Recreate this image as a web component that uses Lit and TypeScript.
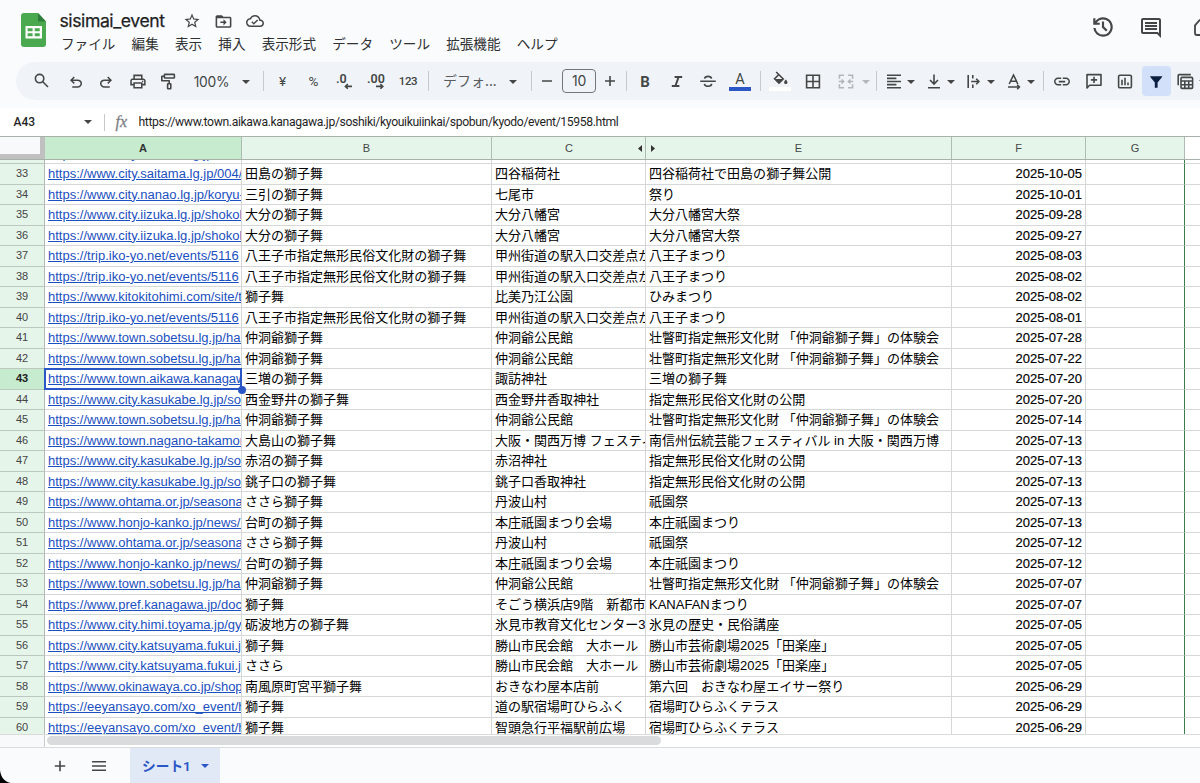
import { LitElement, html, css, svg, nothing } from "lit";
import { customElement } from "lit/decorators.js";
import { classMap } from "lit/directives/class-map.js";
import { styleMap } from "lit/directives/style-map.js";

type Row = [number, string, string, string, string, string];

const SOBETSU = "https://www.town.sobetsu.lg.jp/ha3.html";
const KASUKABE = "https://www.city.kasukabe.lg.jp/so";
const HACHI = "八王子市指定無形民俗文化財の獅子舞";
const KOSHU = "甲州街道の駅入口交差点から";
const TAIKEN = "壮瞥町指定無形文化財 「仲洞爺獅子舞」の体験会";

const ROWS: Row[] = [
  [32, "https://www.city.saitama.lg.jp/004/", "", "", "", ""],
  [33, "https://www.city.saitama.lg.jp/004/", "田島の獅子舞", "四谷稲荷社", "四谷稲荷社で田島の獅子舞公開", "2025-10-05"],
  [34, "https://www.city.nanao.lg.jp/koryu-", "三引の獅子舞", "七尾市", "祭り", "2025-10-01"],
  [35, "https://www.city.iizuka.lg.jp/shokoh", "大分の獅子舞", "大分八幡宮", "大分八幡宮大祭", "2025-09-28"],
  [36, "https://www.city.iizuka.lg.jp/shokoh", "大分の獅子舞", "大分八幡宮", "大分八幡宮大祭", "2025-09-27"],
  [37, "https://trip.iko-yo.net/events/5116", HACHI, KOSHU, "八王子まつり", "2025-08-03"],
  [38, "https://trip.iko-yo.net/events/5116", HACHI, KOSHU, "八王子まつり", "2025-08-02"],
  [39, "https://www.kitokitohimi.com/site/t", "獅子舞", "比美乃江公園", "ひみまつり", "2025-08-02"],
  [40, "https://trip.iko-yo.net/events/5116", HACHI, KOSHU, "八王子まつり", "2025-08-01"],
  [41, SOBETSU, "仲洞爺獅子舞", "仲洞爺公民館", TAIKEN, "2025-07-28"],
  [42, SOBETSU, "仲洞爺獅子舞", "仲洞爺公民館", TAIKEN, "2025-07-22"],
  [43, "https://www.town.aikawa.kanagawa.jp/", "三増の獅子舞", "諏訪神社", "三増の獅子舞", "2025-07-20"],
  [44, KASUKABE, "西金野井の獅子舞", "西金野井香取神社", "指定無形民俗文化財の公開", "2025-07-20"],
  [45, SOBETSU, "仲洞爺獅子舞", "仲洞爺公民館", TAIKEN, "2025-07-14"],
  [46, "https://www.town.nagano-takamori", "大島山の獅子舞", "大阪・関西万博 フェスティバル", "南信州伝統芸能フェスティバル in 大阪・関西万博", "2025-07-13"],
  [47, KASUKABE, "赤沼の獅子舞", "赤沼神社", "指定無形民俗文化財の公開", "2025-07-13"],
  [48, KASUKABE, "銚子口の獅子舞", "銚子口香取神社", "指定無形民俗文化財の公開", "2025-07-13"],
  [49, "https://www.ohtama.or.jp/seasonal", "ささら獅子舞", "丹波山村", "祇園祭", "2025-07-13"],
  [50, "https://www.honjo-kanko.jp/news/2", "台町の獅子舞", "本庄祇園まつり会場", "本庄祇園まつり", "2025-07-13"],
  [51, "https://www.ohtama.or.jp/seasonal", "ささら獅子舞", "丹波山村", "祇園祭", "2025-07-12"],
  [52, "https://www.honjo-kanko.jp/news/2", "台町の獅子舞", "本庄祇園まつり会場", "本庄祇園まつり", "2025-07-12"],
  [53, SOBETSU, "仲洞爺獅子舞", "仲洞爺公民館", TAIKEN, "2025-07-07"],
  [54, "https://www.pref.kanagawa.jp/docs", "獅子舞", "そごう横浜店9階　新都市", "KANAFANまつり", "2025-07-07"],
  [55, "https://www.city.himi.toyama.jp/gy", "砺波地方の獅子舞", "氷見市教育文化センター3", "氷見の歴史・民俗講座", "2025-07-05"],
  [56, "https://www.city.katsuyama.fukui.jp", "獅子舞", "勝山市民会館　大ホール", "勝山市芸術劇場2025「田楽座」", "2025-07-05"],
  [57, "https://www.city.katsuyama.fukui.jp", "ささら", "勝山市民会館　大ホール", "勝山市芸術劇場2025「田楽座」", "2025-07-05"],
  [58, "https://www.okinawaya.co.jp/shop/", "南風原町宮平獅子舞", "おきなわ屋本店前", "第六回　おきなわ屋エイサー祭り", "2025-06-29"],
  [59, "https://eeyansayo.com/xo_event/h", "獅子舞", "道の駅宿場町ひらふく", "宿場町ひらふくテラス", "2025-06-29"],
  [60, "https://eeyansayo.com/xo_event/h", "獅子舞", "智頭急行平福駅前広場", "宿場町ひらふくテラス", "2025-06-29"],
];

const SELECTED_ROW = 43;

const MENUS = ["ファイル", "編集", "表示", "挿入", "表示形式", "データ", "ツール", "拡張機能", "ヘルプ"];

const undoPath =
  "M280-200v-80h284q63 0 109.5-40T720-420q0-60-46.5-100T564-560H312l104 104-56 56-200-200 200-200 56 56-104 104h252q97 0 167 63t70 157q0 94-70 157t-167 63H280Z";

const glyphs: Record<string, unknown> = {
  search: svg`<g fill="none" stroke="currentColor" stroke-width="1.6"><circle cx="8.6" cy="7.6" r="4.2"/><path d="M11.8 10.8l5.2 5.2"/></g>`,
  undo: svg`<svg x="1" y="2.4" width="18" height="18" viewBox="0 -960 960 960"><path fill="currentColor" d=${undoPath}/></svg>`,
  redo: svg`<svg x="1" y="2.4" width="18" height="18" viewBox="0 -960 960 960"><path fill="currentColor" transform="translate(960 0) scale(-1 1)" d=${undoPath}/></svg>`,
  print: svg`<path transform="translate(.7 1.3) scale(.77)" fill="currentColor" d="M19 8h-1V3H6v5H5c-1.66 0-3 1.34-3 3v6h4v4h12v-4h4v-6c0-1.66-1.34-3-3-3zM8 5h8v3H8V5zm8 12v2H8v-4h8v2zm2-2v-2H6v2H4v-4c0-.55.45-1 1-1h14c.55 0 1 .45 1 1v4h-2zM17.2 11.5a1 1 0 1 0 2 0a1 1 0 1 0-2 0z"/>`,
  paint: svg`<g fill="none" stroke="currentColor" stroke-width="1.6" stroke-linejoin="round"><rect x="6.4" y="3.4" width="10" height="3.6" rx=".6"/><path d="M6.4 5.2H3.8v4.6h7.4v3"/><rect x="9.6" y="12.8" width="3.2" height="5" rx=".5"/></g>`,
  decDown: svg`<text class="num" x="1" y="12">.0</text><path class="st" d="M17 15.4h-6.4M12.8 13L10.4 15.4l2.4 2.4"/>`,
  decUp: svg`<text class="num" x="1" y="12">.00</text><path class="st" d="M10 15.4h6.8M14.4 13l2.4 2.4-2.4 2.4"/>`,
  minus: svg`<path class="st" d="M5 10h10"/>`,
  plus: svg`<path class="st" d="M5 10h10M10 5v10"/>`,
  italic: svg`<path fill="none" stroke="currentColor" stroke-width="2" d="M7.6 6h7.6M4.8 15h7.6M11.6 6L8.4 15"/>`,
  strike: svg`<path class="st" d="M2.2 10.2h15.6M13.6 7.6C13.2 6.1 11.800 5.400 10 5.400S6.8 6.100 6.600 7.600M6.400 12.800c.3 1.600 1.800 2.500 3.700 2.500s3.500-.8 3.500-2.500"/>`,
  fill: svg`<g transform="translate(1.2 -.4)"><path class="st" d="M5 1.4l7 7-4.2 4.2L3.4 8.2 7.4 4.2"/><path fill="currentColor" d="M3.2 8.4h8.6l-4 4.4zM14.6 8.8s1.7 1.9 1.7 3a1.7 1.7 0 0 1-3.4 0c0-1.1 1.7-3 1.7-3z"/></g>`,
  borders: svg`<path class="st" d="M3.6 4.3h12.8v12.4H3.6zM10 4.3v12.4M3.6 10.5h12.8"/>`,
  merge: svg`<path class="st" d="M8 4.3H3.4v3.4M12 4.3h4.6v3.4M8 16.7H3.4v-3.4M12 16.7h4.6v-3.4M2.8 10.5h4.6M5.6 8.5l2 2-2 2M17.2 10.5h-4.6M14.4 8.5l-2 2 2 2"/>`,
  align: svg`<path class="st" d="M3 4.3h14M3 7.4h9.4M3 10.5h14M3 13.6h9.4M3 16.7h14"/>`,
  valign: svg`<path class="st" d="M10 3.6v9.2M6 9l4 4 4-4M4 16.7h12"/>`,
  wrap: svg`<path class="st" d="M4.2 4v13M8.8 4v3.6M8.8 13.4V17M7.2 10.5h7.6M12.2 7.8l2.7 2.7-2.7 2.7"/>`,
  rotate: svg`<path class="st" d="M5.2 13L9.5 4l4.3 9M6.8 10.2h5.4M4 16h11.4M13.2 13.8l2.2 2.2-2.2 2.2"/>`,
  link: svg`<path transform="translate(.4 1) scale(.8)" fill="currentColor" d="M3.9 12c0-1.71 1.39-3.1 3.1-3.1h4V7H7c-2.76 0-5 2.24-5 5s2.24 5 5 5h4v-1.9H7c-1.71 0-3.1-1.39-3.1-3.1zM8 13h8v-2H8v2zm9-6h-4v1.9h4c1.71 0 3.1 1.39 3.1 3.1s-1.39 3.1-3.1 3.1h-4V17h4c2.76 0 5-2.24 5-5s-2.24-5-5-5z"/>`,
  comment: svg`<path class="st" stroke-linejoin="round" d="M3 17V3.6h14v10.6H5.6zM10 5.8v6.2M6.9 8.9h6.2"/>`,
  chart: svg`<rect class="st" x="3.6" y="4.2" width="12.8" height="12.6" rx="1.4"/><path class="st" d="M7 8.8v5.4M10 6.8v7.4M13 11.6v2.6"/>`,
  filter: svg`<path fill="#0b1f40" d="M4.6 5.3h11.2c.4 0 .6.4.3.7L11.6 11.4v5.4H8.8v-5.4L4.3 6c-.3-.3-.1-.7.3-.7z"/>`,
  table: svg`<path class="st" d="M3.2 14.2V4.6c0-.6.4-1 1-1h11.6"/><rect class="st" x="6" y="6.4" width="11.6" height="11" rx="1"/><path class="st" d="M6 10h11.6M6 13.7h11.6M9.8 10v7.4M13.7 10v7.4"/>`,
};

type Tool = { k: "icon" | "caret" | "sep" | "text" | "size" | "font" | "bold" | "color" | "paintfill"; gap: number; w: number; g?: string; cls?: string };

const TOOLS: Tool[] = [
  { k: "icon", g: "search", gap: 15, w: 20 },
  { k: "icon", g: "undo", gap: 14.5, w: 20 },
  { k: "icon", g: "redo", gap: 10.5, w: 20 },
  { k: "icon", g: "print", gap: 12, w: 20 },
  { k: "icon", g: "paint", gap: 10, w: 20 },
  { k: "text", g: "100%", gap: 15.5, w: 36, cls: "zoom" },
  { k: "caret", gap: 11.5, w: 10 },
  { k: "sep", gap: 12, w: 1 },
  { k: "text", g: "¥", gap: 12.5, w: 12, cls: "sym" },
  { k: "text", g: "%", gap: 18, w: 14, cls: "sym" },
  { k: "icon", g: "decDown", gap: 14.5, w: 20 },
  { k: "icon", g: "decUp", gap: 11, w: 20 },
  { k: "text", g: "123", gap: 12, w: 20, cls: "n123" },
  { k: "sep", gap: 10, w: 1 },
  { k: "font", g: "デフォ...", gap: 14, w: 52 },
  { k: "caret", gap: 12.5, w: 10 },
  { k: "sep", gap: 13.5, w: 1 },
  { k: "icon", g: "minus", gap: 5, w: 20 },
  { k: "size", g: "10", gap: 5, w: 34 },
  { k: "icon", g: "plus", gap: 4, w: 20 },
  { k: "sep", gap: 6, w: 1 },
  { k: "bold", g: "B", gap: 8, w: 20 },
  { k: "icon", g: "italic", gap: 12, w: 20 },
  { k: "icon", g: "strike", gap: 11, w: 20 },
  { k: "color", g: "A", gap: 10, w: 24 },
  { k: "sep", gap: 8, w: 1 },
  { k: "paintfill", g: "fill", gap: 7, w: 24 },
  { k: "icon", g: "borders", gap: 11, w: 20 },
  { k: "icon", g: "merge", gap: 12.5, w: 20, cls: "off" },
  { k: "caret", gap: 5.5, w: 10, cls: "off" },
  { k: "sep", gap: 5, w: 1 },
  { k: "icon", g: "align", gap: 6.5, w: 20 },
  { k: "caret", gap: 2.5, w: 10 },
  { k: "icon", g: "valign", gap: 7.5, w: 20 },
  { k: "caret", gap: 2.5, w: 10 },
  { k: "icon", g: "wrap", gap: 7.5, w: 20 },
  { k: "caret", gap: 2.5, w: 10 },
  { k: "icon", g: "rotate", gap: 8, w: 20 },
  { k: "caret", gap: 2, w: 10 },
  { k: "sep", gap: 7, w: 1 },
  { k: "icon", g: "link", gap: 8, w: 20 },
  { k: "icon", g: "comment", gap: 11.5, w: 20 },
  { k: "icon", g: "chart", gap: 11.5, w: 20 },
  { k: "icon", g: "filter", gap: 6.5, w: 29, cls: "active" },
  { k: "icon", g: "table", gap: 4, w: 20 },
  { k: "caret", gap: 3, w: 10 },
];

const glyph = (name: string) => html`<svg class="glyph" width="20" height="20" viewBox="0 0 20 20">${glyphs[name]}</svg>`;
const caret = () => html`<svg class="caret" width="8" height="4" viewBox="0 0 8 4"><path fill="currentColor" d="M0 0h8L4 4z"/></svg>`;

@customElement("app-root")
export class AppRoot extends LitElement {
  static styles = css`
    :host {
      display: flex;
      flex-direction: column;
      width: 1200px;
      height: 783px;
      overflow: hidden;
      background: #f9fbfd;
      color: #444746;
      font-family: Roboto, "Noto Sans CJK JP", sans-serif;
      position: relative;
    }
    * { box-sizing: border-box; }
    svg { display: block; flex: none; }
    .st { fill: none; stroke: currentColor; stroke-width: 1.6; }
    .num { font: 600 12.5px Roboto, sans-serif; fill: currentColor; }

    .top { display: flex; height: 62px; flex: none; }
    .logo { margin: 13px 0 0 20.5px; }
    .titles { margin-left: 13px; padding-top: 10px; flex: 1; }
    .title-row { display: flex; align-items: center; height: 22px; }
    .title { font: 400 17.6px/22px Inter, sans-serif; color: #1f1f1f; width: 106px; white-space: nowrap; letter-spacing: -0.42px; -webkit-text-stroke: 0.25px #1f1f1f; }
    .star { margin-left: 17.5px; }
    .move { margin-left: 13px; }
    .cloud { margin-left: 13px; }
    .menus { display: flex; gap: 16.2px; margin-top: -1px; padding-left: 1.5px; font: 13.6px/24px "Noto Sans CJK JP", sans-serif; color: #303132; white-space: nowrap; }
    .actions { display: flex; padding-top: 14px; }
    .actions .chat { margin: 2px 0 0 23px; }
    .actions .meet { margin: 5px 0 0 30px; }

    .toolbar { display: flex; align-items: center; height: 38px; flex: none; margin-left: 16px; background: #f0f4f9; border-radius: 19px 0 0 19px; overflow: hidden; }
    .tool { display: flex; flex: none; align-items: center; justify-content: center; height: 38px; white-space: nowrap; }
    .off { color: #b3b7bb; }
    .k-caret { padding-top: 2px; }
    .k-sep { height: 20px; background: #c7cacd; }
    .zoom { font: 13.8px/20px Inter, sans-serif; letter-spacing: -0.3px; padding-top: 1px; }
    .sym { font: 400 13.5px/20px Roboto, sans-serif; }
    .n123 { font: 500 11.5px/20px Roboto, sans-serif; letter-spacing: -0.3px; }
    .k-font { font: 14px/20px "Noto Sans CJK JP", sans-serif; justify-content: flex-start; padding-bottom: 2px; color: #5a5d60; }
    .k-size { height: 24px; border: 1px solid #747775; border-radius: 4px; font: 14px/20px Inter, sans-serif; letter-spacing: -0.2px; }
    .k-bold { font: 700 15px/20px Roboto, sans-serif; padding-top: 1px; }
    .k-color, .k-paintfill { flex-direction: column; justify-content: flex-start; }
    .k-color { font: 400 14.5px/17px Roboto, sans-serif; padding-top: 9px; }
    .k-color .swatch { margin-top: -1px; }
    .k-paintfill { padding-top: 9px; }
    .swatch { width: 22px; height: 4px; background: #2a56c6; }
    .k-paintfill .glyph { margin-bottom: -4px; }
    .k-paintfill .swatch { background: #fff; }
    .active { height: 30px; background: #d3e0fa; border-radius: 4px; }

    .formula { display: flex; align-items: center; height: 28px; flex: none; margin-top: 8px; background: #fff; color: #1f1f1f; }
    .name { width: 70px; padding-left: 13.5px; font: 500 12px/26px Roboto, sans-serif; }
    .formula .caret { margin-left: 13.5px; color: #444746; }
    .bar { width: 1px; height: 17px; margin-left: 12px; background: #c7cacd; }
    .fx { width: 18px; margin-left: 11px; font: italic 16px/20px "Liberation Serif", serif; color: #7d8084; -webkit-text-stroke: 0.3px #7d8084; }
    .value { margin-left: 5px; font: 12.2px/26px Roboto, sans-serif; letter-spacing: -0.365px; white-space: nowrap; }

    .head, .row { display: grid; grid-template-columns: 45px 197px 250px 154px 306px 134px 99px 1fr; }
    .head { height: 24px; flex: none; border-top: 1px solid #a9b1ab; border-bottom: 1px solid #a9b1ab; background: #fff; font: 11px/22px "Liberation Sans", sans-serif; text-align: center; }
    .col { display: flex; align-items: center; justify-content: center; background: #e6f5ea; border-right: 1px solid #b0bcb3; }
    .col.on { background: #c6ebcf; font-weight: 700; color: #333; }
    .col.left { justify-content: space-between; padding: 0 3px 0 73px; }
    .col.right { justify-content: space-between; padding: 0 149px 0 5px; }
    .corner { background: #f8f9fb; border-right: 5px solid #c0c0c0; border-bottom: 5px solid #c0c0c0; }

    .body { height: 575px; flex: none; overflow: hidden; background: #fff; border-bottom: 1px solid #dadcdc; }
    .rows { margin-top: -16.5px; }
    .row { height: 20.5px; }
    .cell { border-right: 1px solid #d5d7d8; border-bottom: 1px solid #d5d7d8; padding-left: 3px; overflow: hidden; white-space: nowrap; color: #000; font: 13.03px/20px "Liberation Sans", "Noto Sans CJK JP", sans-serif; }
    .cell.no { padding: 0; text-align: center; background: #e6f5ea; color: #444; font-size: 11px; line-height: 18px; border-right-color: #b4bbb6; border-bottom-color: #bcc7bf; }
    .cell.no.on { background: #c6ebcf; font-weight: 700; color: #222; }
    .cell.url { color: #1b50c0; text-decoration: underline; }
    .cell.date { text-align: right; padding: 0 3px 0 0; -webkit-text-stroke: 0.15px #000; }
    .cell.g { border-right: 1px solid #3f7a4c; }
    .cell.last { border-right: 0; }
    .pick { position: relative; min-width: 0; }
    .pick .cell { height: 20.5px; }
    .pick::before { content: ""; position: absolute; inset: -1px 0 0 -1px; border: 2px solid #2a56c6; }
    .pick::after { content: ""; position: absolute; right: -4px; bottom: -4px; width: 8px; height: 8px; border-radius: 50%; background: #2a56c6; z-index: 1; }

    .scroll { display: flex; height: 13px; flex: none; background: #fff; border-bottom: 1px solid #d9dcdf; }
    .gutter { width: 45px; background: #f8f9fa; border-right: 1px solid #c8cbcd; }
    .thumb { width: 614px; height: 9px; margin: 1px 0 0 2px; border-radius: 5px; background: #d9dbdd; }

    .tabs { display: flex; flex: 1; align-items: stretch; background: #f9fbfd; }
    .tabs .add { margin: 8px 0 0 50px; }
    .tabs .all { margin: 8px 0 0 19px; }
    .tab { display: flex; align-items: center; width: 90px; margin-left: 21px; padding-left: 12px; background: #e1e9f7; color: #2a56c6; font: 600 13.7px/20px Roboto, "Noto Sans CJK JP", sans-serif; }
    .tab .caret { margin-left: 10px; }
    .notch { position: absolute; left: 0; bottom: 0; }
  `;

  private tool(t: Tool) {
    const body = {
      icon: () => glyph(t.g!),
      caret: () => caret(),
      sep: () => nothing,
      text: () => t.g,
      size: () => t.g,
      font: () => t.g,
      bold: () => t.g,
      color: () => html`<span>${t.g}</span><span class="swatch"></span>`,
      paintfill: () => html`${glyph("fill")}<span class="swatch"></span>`,
    }[t.k]();
    return html`<div class="tool k-${t.k} ${t.cls ?? ""}" style=${styleMap({ width: `${t.w}px`, marginLeft: `${t.gap}px` })}>${body}</div>`;
  }

  private row([n, url, b, c, e, f]: Row) {
    const on = n === SELECTED_ROW;
    return html`<div class="row">
      <div class=${classMap({ cell: true, no: true, on })}>${n}</div>
      ${on ? html`<div class="pick"><div class="cell url">${url}</div></div>` : html`<div class="cell url">${url}</div>`}
      <div class="cell">${b}</div>
      <div class="cell">${c}</div>
      <div class="cell">${e}</div>
      <div class="cell date">${f}</div>
      <div class="cell g"></div>
      <div class="cell last"></div>
    </div>`;
  }

  render() {
    return html`
      <div class="top">
        <svg class="logo" width="26" height="34" viewBox="0 0 26 34">
          <path fill="#4aa84f" d="M3 0h14L25 8.5V31a3 3 0 0 1-3 3H3a3 3 0 0 1-3-3V3a3 3 0 0 1 3-3z"/>
          <path fill="#2f7d3b" d="M17 0L25 8.5h-8z"/>
          <path fill="#fff" fill-rule="evenodd" d="M4.5 13h16.5v12.5H4.5zM6.6 15.2v3h5v-3zM13.7 15.2v3h5v-3zM6.6 20.3v3h5v-3zM13.7 20.3v3h5v-3z"/>
        </svg>
        <div class="titles">
          <div class="title-row">
            <span class="title">sisimai_event</span>
            <svg class="star" width="18" height="18" viewBox="0 0 24 24"><path fill="currentColor" d="M22 9.24l-7.19-.62L12 2 9.19 8.63 2 9.24l5.46 4.73L5.82 21 12 17.27 18.18 21l-1.63-7.03L22 9.24zM12 15.4l-3.76 2.27 1-4.28-3.32-2.88 4.38-.38L12 6.1l1.71 4.04 4.38.38-3.32 2.88 1 4.28L12 15.4z"/></svg>
            <svg class="move" width="19" height="19" viewBox="0 0 24 24"><path fill="currentColor" d="M20 6h-8l-2-2H4c-1.1 0-2 .9-2 2v12c0 1.1.9 2 2 2h16c1.1 0 2-.9 2-2V8c0-1.1-.9-2-2-2zm0 12H4V8h16v10zm-8-1l4-4-4-4v3H8v2h4z"/></svg>
            <svg class="cloud" width="18" height="18" viewBox="0 0 24 24"><path fill="currentColor" d="M19.35 10.04C18.67 6.59 15.64 4 12 4 9.11 4 6.61 5.64 5.36 8.04 2.34 8.36 0 10.91 0 14c0 3.31 2.69 6 6 6h13c2.76 0 5-2.24 5-5 0-2.64-2.05-4.78-4.65-4.96zM19 18H6c-2.21 0-4-1.79-4-4 0-2.05 1.53-3.76 3.56-3.97l1.07-.11.5-.95C8.08 7.14 9.94 6 12 6c2.62 0 4.88 1.86 5.39 4.43l.3 1.5 1.53.11c1.56.1 2.78 1.41 2.78 2.96 0 1.65-1.35 3-3 3zm-8.6-3.6l-2-2-1.3 1.3 3.3 3.3 5.8-5.8-1.3-1.3z"/></svg>
          </div>
          <div class="menus">${MENUS.map((m) => html`<span>${m}</span>`)}</div>
        </div>
        <div class="actions">
          <svg width="26" height="26" viewBox="0 -960 960 960"><path fill="currentColor" d="M480-120q-138 0-240.5-91.5T122-440h82q14 104 92.5 172T480-200q117 0 198.5-81.5T760-480q0-117-81.5-198.5T480-760q-69 0-129 32t-101 88h110v80H120v-240h80v94q51-64 124.5-99T480-840q75 0 140.5 28.5t114 77q48.5 48.5 77 114T840-480q0 75-28.5 140.5t-77 114q-48.5 48.5-114 77T480-120Zm112-192L440-464v-216h80v184l128 128-56 56Z"/></svg>
          <svg class="chat" width="24" height="24" viewBox="0 0 24 24"><path fill="currentColor" d="M21.99 4c0-1.1-.89-2-1.99-2H4c-1.1 0-2 .9-2 2v12c0 1.1.9 2 2 2h14l4 4-.01-18zM20 4v13.17L18.83 16H4V4h16zM6 12h12v2H6zm0-3h12v2H6zm0-3h12v2H6z"/></svg>
          <svg class="meet" width="7" height="18" viewBox="0 0 7 18"><path fill="none" stroke="currentColor" stroke-width="1.8" d="M9 1.2H6.6L2 6.4V14a2 2 0 0 0 2 2h5"/></svg>
        </div>
      </div>

      <div class="toolbar">${TOOLS.map((t) => this.tool(t))}</div>

      <div class="formula">
        <span class="name">A43</span>${caret()}
        <span class="bar"></span>
        <span class="fx">fx</span>
        <span class="value">https://www.town.aikawa.kanagawa.jp/soshiki/kyouikuiinkai/spobun/kyodo/event/15958.html</span>
      </div>

      <div class="head">
        <div class="corner"></div>
        <div class="col on">A</div>
        <div class="col">B</div>
        <div class="col left">C<svg width="4" height="7" viewBox="0 0 4 7"><path fill="#333" d="M4 0v7L0 3.5z"/></svg></div>
        <div class="col right"><svg width="4" height="7" viewBox="0 0 4 7"><path fill="#333" d="M0 0v7l4-3.5z"/></svg>E</div>
        <div class="col">F</div>
        <div class="col">G</div>
        <div></div>
      </div>

      <div class="body"><div class="rows">${ROWS.map((r) => this.row(r))}</div></div>

      <div class="scroll"><div class="gutter"></div><div class="thumb"></div></div>

      <div class="tabs">
        <svg class="add" width="20" height="20" viewBox="0 0 20 20"><path class="st" d="M4.8 10h10.4M10 4.8v10.4"/></svg>
        <svg class="all" width="20" height="20" viewBox="0 0 20 20"><path class="st" d="M3 5.8h14M3 10h14M3 14.2h14"/></svg>
        <div class="tab">シート1${caret()}</div>
      </div>
      <svg class="notch" width="11" height="13" viewBox="0 0 11 13"><path d="M0 0c.6 7 4.5 12 11 13H0z"/></svg>
    `;
  }
}
